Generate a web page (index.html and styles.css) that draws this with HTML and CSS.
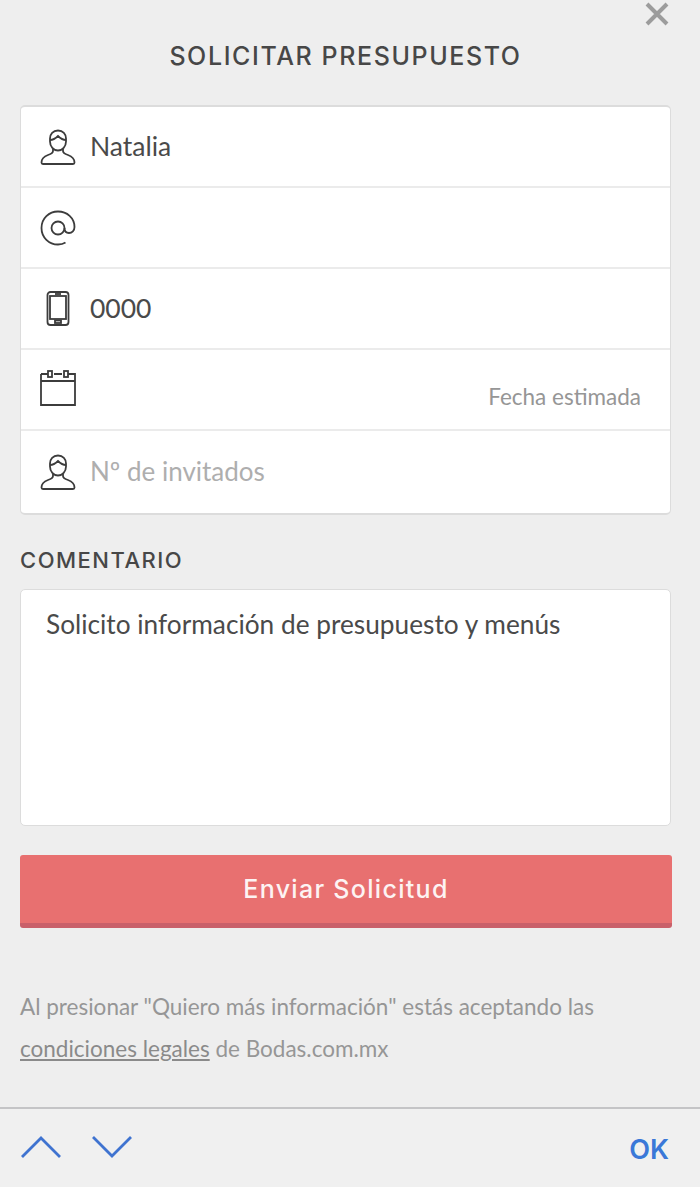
FILE: index.html
```html
<!DOCTYPE html>
<html lang="es">

<head>
    <meta charset="UTF-8">
    <meta name="viewport" content="width=device-width, initial-scale=1.0">
    <title>Solicitar presupuesto</title>
    <link rel="stylesheet" href="styles.css">
</head>

<body>
    <div class="page">
        <div class="close">
            <svg width="24" height="24" viewBox="0 0 24 24">
                <path d="M2 2L22 22M22 2L2 22" />
            </svg>
        </div>
        <h1 class="title">SOLICITAR PRESUPUESTO</h1>

        <div class="card">
            <div class="row">
                <svg class="icon" viewBox="0 0 36 36">
                    <path d="M18 1.500c-5 0-8 3.500-8 8v3c0 5 3.500 9 8 9s8-4 8-9v-3c0-4.500-3-8-8-8z" />
                    <path d="M10 11c3 0 5-1 8-4 3 3 5 4 8 4" />
                    <path d="M13 20v2c0 2-2 3-5 4-4 1.500-6.500 3.500-6.500 7.500 0 1 .5 1.500 1.500 1.500h30c1 0 1.500-.5 1.500-1.500 0-4-2.500-6-6.500-7.500-3-1-5-2-5-4v-2" />
                </svg>
                <span class="value">Natalia</span>
            </div>
            <div class="row">
                <svg class="icon" viewBox="0 0 36 36">
                    <circle cx="18" cy="18" r="6.500" />
                    <path d="M24.500 18c0 3 1.500 5 4.500 5s5.500-2.500 5.500-6C34.500 8 27 1.500 18 1.500S1.500 8.500 1.500 18 9 34.500 18 34.500c3 0 5.500-.7 7.500-2" />
                </svg>
            </div>
            <div class="row">
                <svg class="icon" viewBox="0 0 36 36">
                    <rect x="7.500" y="1" width="21" height="33" rx="3" />
                    <rect x="10" y="5" width="16" height="23" />
                    <path d="M15 3h6" />
                    <rect x="15" y="29.500" width="6" height="2.500" />
                </svg>
                <span class="value">0000</span>
            </div>
            <div class="row row-date">
                <svg class="icon icon-date" viewBox="0 0 36 36">
                    <path d="M1 4h7M14 4h8M28 4h7v31H1V4M1 11h34" />
                    <rect x="8" y="1" width="4" height="6" />
                    <rect x="24" y="1" width="4" height="6" />
                </svg>
                <span class="date-hint">Fecha estimada</span>
            </div>
            <div class="row row-last">
                <svg class="icon" viewBox="0 0 36 36">
                    <path d="M18 1.500c-5 0-8 3.500-8 8v3c0 5 3.500 9 8 9s8-4 8-9v-3c0-4.500-3-8-8-8z" />
                    <path d="M10 11c3 0 5-1 8-4 3 3 5 4 8 4" />
                    <path d="M13 20v2c0 2-2 3-5 4-4 1.500-6.500 3.500-6.500 7.500 0 1 .5 1.500 1.500 1.500h30c1 0 1.500-.5 1.500-1.500 0-4-2.500-6-6.500-7.500-3-1-5-2-5-4v-2" />
                </svg>
                <span class="value placeholder">Nº de invitados</span>
            </div>
        </div>

        <div class="label">COMENTARIO</div>
        <div class="comment">Solicito información de presupuesto y menús</div>

        <div class="send">Enviar Solicitud</div>

        <p class="legal">Al presionar "Quiero más información" estás aceptando las<br><a href="#">condiciones legales</a> de Bodas.com.mx</p>
    </div>

    <div class="toolbar">
        <div class="arrows">
            <svg width="40" height="22" viewBox="0 0 40 22">
                <path d="M1 21L20 2L39 21" />
            </svg>
            <svg width="40" height="22" viewBox="0 0 40 22">
                <path d="M1 1L20 20L39 1" />
            </svg>
        </div>
        <span class="ok">OK</span>
    </div>
</body>

</html>
```

FILE: styles.css
```css
* {
    margin: 0;
    padding: 0;
    box-sizing: border-box;
}

html,
body {
    height: 100%;
}

body {
    display: flex;
    flex-direction: column;
    background-color: #eeeeee;
    font-family: "Lato", "Liberation Sans", sans-serif;
    color: #4a4a4a;
}

.page {
    position: relative;
    height: 1107px;
    padding: 0 29px 0 20px;
}

.close {
    position: absolute;
    top: 2px;
    right: 31px;
    width: 24px;
    height: 24px;
}

.close svg path {
    fill: none;
    stroke: #9c9c9c;
    stroke-width: 4;
}

.title {
    padding-top: 41px;
    height: 105px;
    text-align: center;
    font-family: "Inter", "Liberation Sans", sans-serif;
    font-size: 25px;
    line-height: 30px;
    font-weight: 500;
    letter-spacing: 1.600px;
    color: #474747;
}

.card {
    height: 410px;
    background-color: #fff;
    border: 1px solid #dcdcdc;
    border-top-width: 2px;
    border-bottom-width: 2px;
    border-radius: 5px;
}

.row {
    display: flex;
    align-items: center;
    height: 81px;
    padding-left: 19px;
    border-bottom: 2px solid #ebebeb;
}

.row-last {
    border-bottom: none;
}

.row-date {
    align-items: flex-start;
    justify-content: space-between;
    padding-right: 29px;
}

.icon {
    flex-shrink: 0;
    width: 36px;
    height: 36px;
    margin-right: 14px;
    fill: none;
    stroke: #3c3c3c;
    stroke-width: 1.800;
}

.icon-date {
    margin-top: 20px;
}

.value {
    margin-bottom: 2px;
    font-size: 26.500px;
    line-height: 34px;
    color: #4a4a4a;
}

.placeholder {
    font-size: 26px;
    color: #aeaeae;
}

.date-hint {
    margin-top: 33px;
    font-size: 22.500px;
    line-height: 28px;
    color: #969696;
}

.label {
    margin-top: 32px;
    font-family: "Inter", "Liberation Sans", sans-serif;
    font-size: 22px;
    line-height: 26px;
    font-weight: 500;
    letter-spacing: 1.500px;
    color: #474747;
}

.comment {
    height: 237px;
    margin-top: 16px;
    padding: 16px 25px;
    background-color: #fff;
    border: 1px solid #dcdcdc;
    border-radius: 5px;
    font-size: 26.250px;
    line-height: 36px;
}

.send {
    height: 73px;
    margin-top: 29px;
    margin-right: -1px;
    background-color: #e87070;
    border-bottom: 5px solid #c9606a;
    border-radius: 3px;
    text-align: center;
    font-family: "Inter", "Liberation Sans", sans-serif;
    font-size: 25px;
    line-height: 68px;
    font-weight: 500;
    letter-spacing: 1.300px;
    color: #fdf3f3;
}

.legal {
    margin-top: 58px;
    font-size: 22.500px;
    line-height: 42px;
    color: #969696;
}

.legal a {
    color: #8a8a8a;
}

.toolbar {
    flex: 1;
    display: flex;
    align-items: center;
    justify-content: space-between;
    padding: 0 31px 0 21px;
    background-color: #f0f0f0;
    border-top: 2px solid #c4c4c6;
}

.arrows {
    display: flex;
    gap: 31px;
    margin-bottom: 2px;
}

.arrows svg path {
    fill: none;
    stroke: #3f73d0;
    stroke-width: 2.800;
}

.ok {
    margin-top: 3px;
    font-family: "Inter", "Liberation Sans", sans-serif;
    font-size: 27px;
    font-weight: 600;
    color: #3a78d8;
}
```
